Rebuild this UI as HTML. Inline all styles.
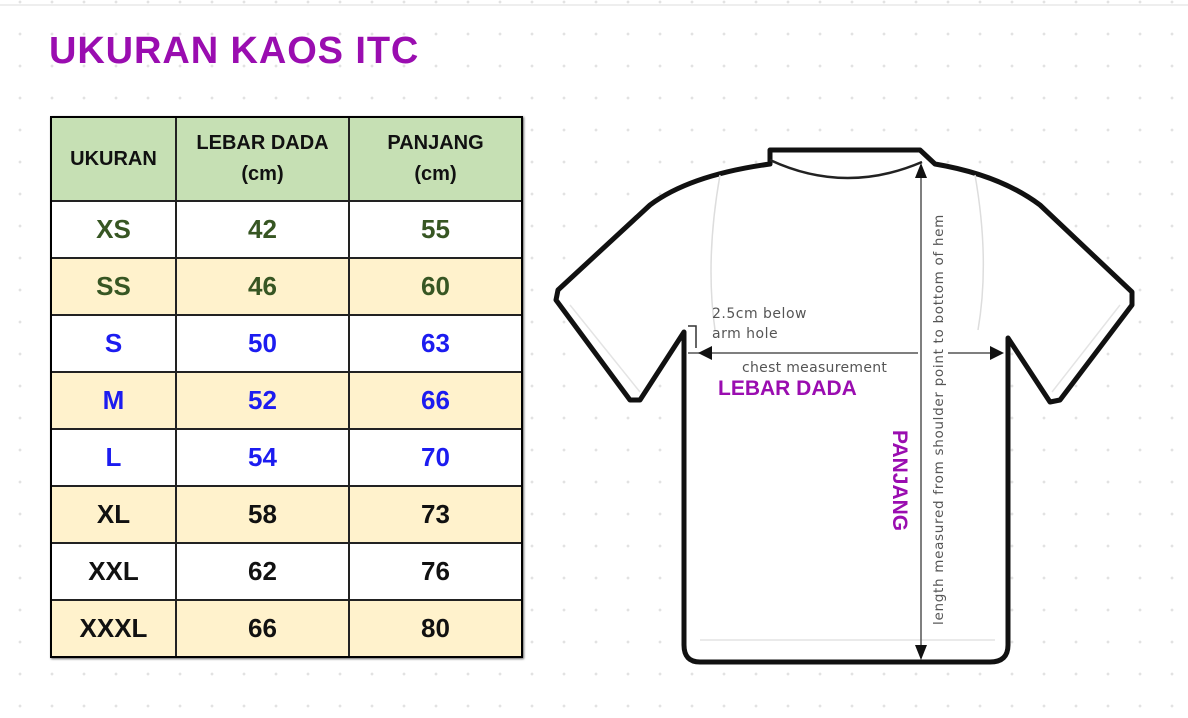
<!DOCTYPE html>
<html><head><meta charset="utf-8"><style>
body{margin:0;width:1188px;height:718px;overflow:hidden;background:#fff;position:relative;font-family:"Liberation Sans",sans-serif;
background-image:radial-gradient(circle,#e2e2e2 1.2px,transparent 1.6px);background-size:32px 32px;background-position:4px 18px}
.top{position:absolute;left:0;top:4px;width:1188px;height:2px;background:#eee}
h1{position:absolute;left:49px;top:30px;margin:0;font-size:38px;font-weight:bold;color:#9a0db0;letter-spacing:0.9px}
.tbl{position:absolute;left:50px;top:116px;width:469px;height:538px;border:2px solid #000;background:#fff;box-shadow:1px 1px 2px #666}
.r{position:absolute;left:0;width:469px;display:flex;border-top:2px solid #222;box-sizing:border-box}
.c{display:flex;align-items:center;justify-content:center;text-align:center;font-weight:bold;font-size:26px;border-right:2px solid #222;box-sizing:border-box;height:100%}
.c:nth-child(1){width:125px}.c:nth-child(2){width:173px}.c:nth-child(3){width:171px;border-right:none}
.h .c{font-size:20px;line-height:31px;color:#111}
.y{background:#fff2cc}.g{color:#375623}.b{color:#1c1cf0}.k{color:#111}
</style></head><body>
<div class="top"></div>
<h1>UKURAN KAOS ITC</h1>
<div class="tbl">
<div class="r h" style="top:0;height:82px;border-top:none;background:#c6e0b4"><div class="c">UKURAN</div><div class="c">LEBAR DADA<br>(cm)</div><div class="c">PANJANG<br>(cm)</div></div>
<div class="r g" style="top:82px;height:57px"><div class="c">XS</div><div class="c">42</div><div class="c">55</div></div>
<div class="r g y" style="top:139px;height:57px"><div class="c">SS</div><div class="c">46</div><div class="c">60</div></div>
<div class="r b" style="top:196px;height:57px"><div class="c">S</div><div class="c">50</div><div class="c">63</div></div>
<div class="r b y" style="top:253px;height:57px"><div class="c">M</div><div class="c">52</div><div class="c">66</div></div>
<div class="r b" style="top:310px;height:57px"><div class="c">L</div><div class="c">54</div><div class="c">70</div></div>
<div class="r k y" style="top:367px;height:57px"><div class="c">XL</div><div class="c">58</div><div class="c">73</div></div>
<div class="r k" style="top:424px;height:57px"><div class="c">XXL</div><div class="c">62</div><div class="c">76</div></div>
<div class="r k y" style="top:481px;height:57px"><div class="c">XXXL</div><div class="c">66</div><div class="c">80</div></div>
</div>
<svg width="1188" height="718" style="position:absolute;left:0;top:0">
<path d="M770,150 L920,150 L935,164 Q1000,175 1040,205 L1132,292 L1132,305 L1060,400 L1050,402 L1008,338 L1008,645 Q1008,662 990,662 L700,662 Q684,662 684,645 L684,332 L640,400 L630,400 L556,300 L558,290 L650,205 Q690,175 770,164 Z" fill="#fff" stroke="#111" stroke-width="5" stroke-linejoin="round"/>
<path d="M770,160 Q845,195 922,162" fill="none" stroke="#222" stroke-width="2.5"/>
<path d="M720,175 Q705,260 715,330 M975,175 Q990,260 978,330" fill="none" stroke="#ddd" stroke-width="1.5"/>
<path d="M570,305 L640,392 M1120,305 L1052,392 M700,640 L995,640" fill="none" stroke="#e4e4e4" stroke-width="1.5"/>
<line x1="921" y1="165" x2="921" y2="658" stroke="#555" stroke-width="1.5"/>
<polygon points="921,163 915,178 927,178" fill="#111"/>
<polygon points="921,660 915,645 927,645" fill="#111"/>
<line x1="688" y1="353" x2="918" y2="353" stroke="#555" stroke-width="1.5"/>
<line x1="948" y1="353" x2="1002" y2="353" stroke="#555" stroke-width="1.5"/>
<polygon points="698,353 712,346 712,360" fill="#111"/>
<polygon points="1004,353 990,346 990,360" fill="#111"/>
<path d="M688,326 L696,326 L696,348" fill="none" stroke="#333" stroke-width="1.5"/>
<text x="712" y="318" font-size="14" fill="#555" font-family="DejaVu Sans" letter-spacing="0.5">2.5cm below</text>
<text x="712" y="338" font-size="14" fill="#555" font-family="DejaVu Sans" letter-spacing="0.5">arm hole</text>
<text x="742" y="372" font-size="14" fill="#555" font-family="DejaVu Sans" letter-spacing="0.3">chest measurement</text>
<text x="718" y="395" font-size="21" font-weight="bold" fill="#9a0db0" font-family="Liberation Sans">LEBAR DADA</text>
<text transform="translate(893,430) rotate(90)" font-size="21" font-weight="bold" fill="#9a0db0" font-family="Liberation Sans">PANJANG</text>
<text transform="translate(943,625) rotate(-90)" font-size="13.5" fill="#555" font-family="DejaVu Sans" letter-spacing="0.7">length measured from shoulder point to bottom of hem</text>
</svg>
</body></html>
